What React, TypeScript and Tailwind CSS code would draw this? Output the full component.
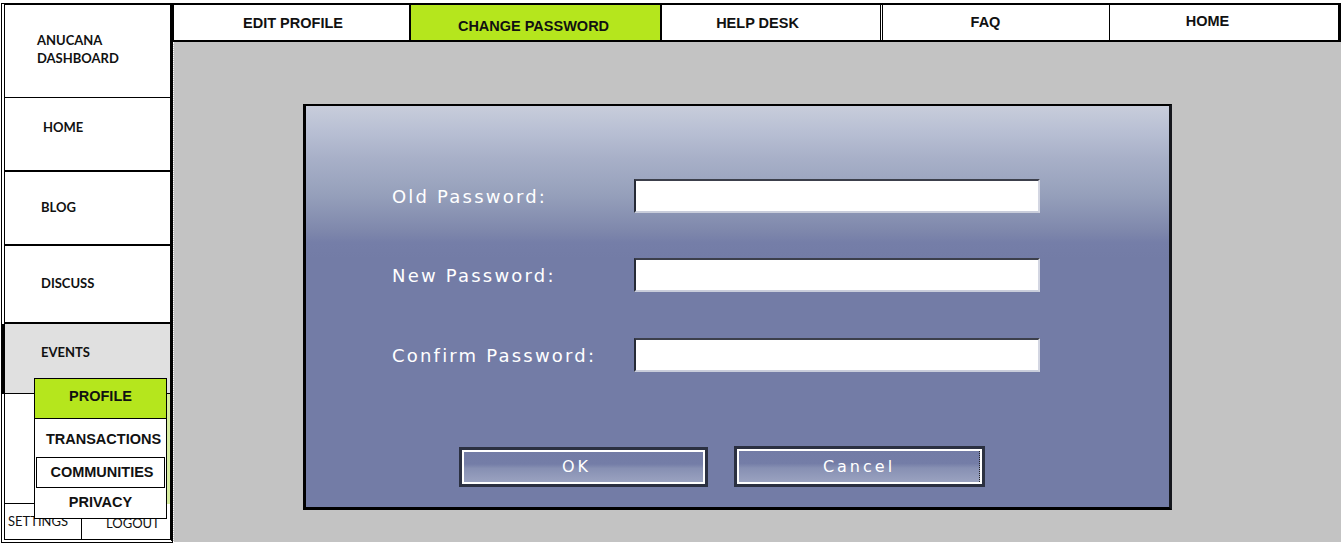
import React from "react";

const tabs = [
  { label: "EDIT PROFILE", w: "w-[236px]", cls: "border-l border-black bg-white pl-[3px] pt-[2px]" },
  { label: "CHANGE PASSWORD", w: "w-[251px]", cls: "border-l-2 border-black bg-[#b5e61d] pr-[4px] pt-[8px]" },
  { label: "HELP DESK", w: "w-[220px]", cls: "border-l-2 border-black bg-white pr-[27px] pt-[3px]" },
  { label: "FAQ", w: "w-[229px]", cls: "border-l-[3px] border-double border-black bg-white pr-[21px]" },
  { label: "HOME", w: "w-[232px]", cls: "border-l border-r-[3px] border-black bg-white pr-[33px] pb-[2px]" },
];

function Sidebar() {
  return (
    <div className="relative w-[172px] h-[540px] shrink-0 flex flex-col border-l-[4px] border-b-[4px] border-double border-t-2 border-r-[3px] [border-top-style:solid] [border-right-style:solid] border-black bg-white font-['Lato','Open_Sans',sans-serif] text-[13px] text-[#111]">
      <div className="h-[93px] shrink-0 border-b border-black pl-[32px] pt-[26px] font-bold leading-[18px]">
        <div>ANUCANA</div>
        <div>DASHBOARD</div>
      </div>
      <div className="h-[74px] shrink-0 border-b-2 border-black pl-[38px] pt-[20px] font-bold leading-[18px]">HOME</div>
      <div className="h-[74px] shrink-0 border-b-2 border-black pl-[36px] pt-[26px] font-bold leading-[18px]">BLOG</div>
      <div className="h-[78px] shrink-0 border-b-2 border-black pl-[36px] pt-[28px] font-bold leading-[18px]">DISCUSS</div>
      <div className="h-[70px] shrink-0 -ml-[3px] border-l-[3px] border-b border-black bg-[#e0e0e0] pl-[36px] pt-[19px] font-bold leading-[18px]">EVENTS</div>
      <div className="flex-1" />
      <div className="h-[36px] shrink-0 flex border-t border-black leading-[18px]">
        <div className="w-[77px] border-r border-black pl-[3px] pt-[8px]">SETTINGS</div>
        <div className="flex-1 pl-[24px] pt-[10px]">LOGOUT</div>
      </div>
    </div>
  );
}

function ProfileMenu() {
  return (
    <>
      <div className="absolute left-[167px] top-[394px] w-[3px] h-[110px] bg-[#d6eca0]" />
      <div className="absolute left-[34px] top-[378px] w-[133px] h-[141px] border border-black bg-white flex flex-col font-['Liberation_Sans',Arial,sans-serif] text-[14.5px] font-bold text-[#111]">
        <div className="h-[40px] shrink-0 flex items-center justify-center bg-[#b5e61d] border-b border-black pb-[4px]">PROFILE</div>
        <div className="h-[38px] shrink-0 flex items-center justify-center pl-[6px] pt-[3px]">TRANSACTIONS</div>
        <div className="h-[31px] shrink-0 mx-[1px] flex items-center justify-center border-[1.5px] border-black pl-[3px]">COMMUNITIES</div>
        <div className="flex-1 flex items-center justify-center">PRIVACY</div>
      </div>
    </>
  );
}

function Field({ label }: { label: string }) {
  return (
    <div className="flex items-center">
      <div className="w-[242px] shrink-0 text-white text-[18px] tracking-[2.2px]">{label}</div>
      <div className="w-[406px] h-[34px] bg-white border-t-2 border-l-2 border-t-[#3c3f4b] border-l-[#262a36] border-b-2 border-r-2 border-b-[#c9cddb] border-r-[#d3d6e2]" />
    </div>
  );
}

function DialogButton({ label, focused, shift }: { label: string; focused?: boolean; shift?: string }) {
  return (
    <div className="h-full border-[3px] border-[#2b3041]">
      <div className="h-full border-2 border-white bg-[linear-gradient(180deg,#737ca6_0%,#747da7_40%,#8790b3_55%,#9aa2c0_100%)]">
        <div className={`h-full flex items-center justify-center text-white text-[16px] tracking-[3px] ${shift ?? ""} ${focused ? "border-r border-dotted border-[#222]" : ""}`}>
          {label}
        </div>
      </div>
    </div>
  );
}

function PasswordDialog() {
  return (
    <div className="ml-[129px] mt-[62px] w-[869px] h-[406px] border-t-2 border-l-[3px] border-r-[3px] border-b-[3px] border-black border-r-[#15171d] bg-[linear-gradient(180deg,#c8cddb_0%,#b9c0d4_6%,#a8b0c8_13%,#96a0bb_22%,#7f88ac_31%,#757ea8_34%,#737ca6_38%,#737ca6_100%)] font-['DejaVu_Sans',sans-serif] pl-[86px] pt-[73px]">
      <div className="flex flex-col gap-[45px]">
        <Field label="Old Password:" />
        <Field label="New Password:" />
        <div className="mt-[1px]">
          <Field label="Confirm Password:" />
        </div>
      </div>
      <div className="flex mt-[75px] ml-[67px] gap-[26px] h-[40px]">
        <div className="w-[249px]">
          <DialogButton label="OK" shift="pr-[14px]" />
        </div>
        <div className="w-[251px] -mt-[1px] h-[41px]">
          <DialogButton label="Cancel" focused />
        </div>
      </div>
    </div>
  );
}

export default function App() {
  return (
    <div className="relative w-[1344px] h-[545px] overflow-hidden bg-white flex items-start pl-[1px] pt-[3px]">
      <Sidebar />
      <div className="w-[1168px] shrink-0 flex flex-col">
        <div className="h-[39px] flex border-t-2 border-b-2 border-black font-['Liberation_Sans',Arial,sans-serif] text-[14.5px] font-bold text-[#111]">
          {tabs.map((t) => (
            <div key={t.label} className={`${t.w} shrink-0 flex items-center justify-center ${t.cls}`}>
              {t.label}
            </div>
          ))}
        </div>
        <div className="h-[500px] bg-[#c3c3c3] border-l border-dotted border-white flex flex-col">
          <PasswordDialog />
        </div>
      </div>
      <ProfileMenu />
    </div>
  );
}
